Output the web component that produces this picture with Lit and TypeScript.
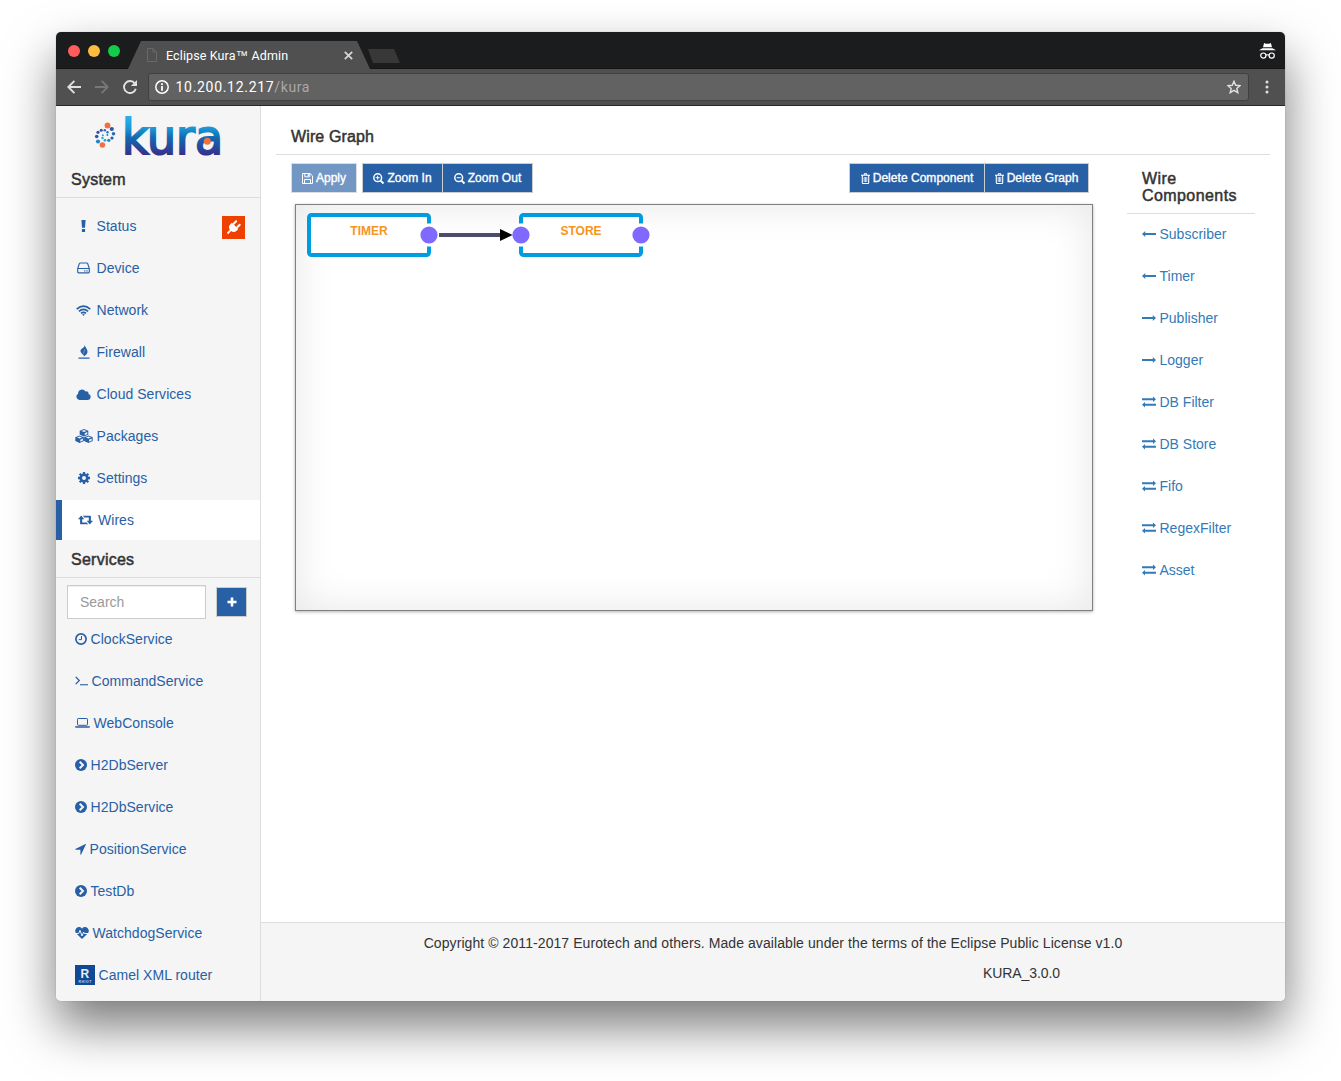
import { LitElement, html, svg, css } from "lit";
import { customElement, property } from "lit/decorators.js";

type Glyph = { w: number; h: number; body: unknown };

const glyphs: Record<string, Glyph> = {
  bang: { w: 5, h: 12, body: svg`<path fill="currentColor" d="M.4 0h4.2l-.6 7.8H1zM.9 8.9h3.2v3H.9z"/>` },
  hdd: {
    w: 13, h: 12,
    body: svg`<path fill="none" stroke="currentColor" stroke-width="1.150" d="M.7 6.600 2.300 1.600Q2.500 1 3.200 1h6.600q.7 0 .9.6l1.600 5V10q0 .9-.9.9H1.600Q.7 10.900.7 10zM.9 6.500h11.300"/><path fill="currentColor" d="M7.200 8.200h1.200v1.200H7.200zM9.400 8.200h1.200v1.200H9.400z"/>`,
  },
  wifi: {
    w: 15, h: 11,
    body: svg`<g fill="none" stroke="currentColor" stroke-width="1.700"><path d="M.7 4.100Q7.500-2 14.300 4.100"/><path d="M2.900 6.300Q7.500 2.300 12.100 6.300"/><path d="M5 8.400Q7.500 6.400 10 8.400"/></g><path fill="currentColor" d="M6.200 9.500Q7.500 8.600 8.800 9.500L7.500 10.900z"/>`,
  },
  fire: {
    w: 12, h: 14,
    body: svg`<path fill="currentColor" d="M.5 12.600h11v1.100H.5zM6.600 0C7.300 2.800 9.500 3.800 9.500 6.800 9.500 9.300 7.600 10.300 5.800 11.600 6.200 9.900 4.800 9.800 3.600 8.300 1.400 5.500 3 4.200 4.800 3 6.300 2 6.800 1.200 6.600 0z"/><path stroke="#f5f5f5" stroke-width=".4" fill="none" d="M6.600 4.400C7.200 6 5.200 6.500 5.700 8.400"/>`,
  },
  cloud: {
    w: 15, h: 11,
    body: svg`<path fill="currentColor" d="M3.400 10.900A3.300 3.300 0 0 1 2.100 4.700 4 4 0 0 1 9.500 2.500 2.200 2.200 0 0 1 12.500 5.100 2.950 2.950 0 0 1 11.900 10.900z"/>`,
  },
  cubes: {
    w: 18, h: 14,
    body: svg`${[[9, 0], [4.6, 6.500], [13.400, 6.500]].map(
      ([x, y]) => svg`<g transform="translate(${x} ${y})"><path fill="currentColor" d="M0 0 4.300 1.700V5.600L0 7.500-4.300 5.600V1.700z"/><path fill="#f5f5f5" d="M0 .9 2.600 1.900 0 3-2.600 1.900z"/><path fill="#f5f5f5" d="M.7 4.200 3.300 3V5L.7 6.200z"/></g>`
    )}`,
  },
  cog: {
    w: 12, h: 12,
    body: svg`<circle cx="6" cy="6" r="3.300" fill="none" stroke="currentColor" stroke-width="2.600"/><g stroke="currentColor" stroke-width="2.300"><path d="M6 0v2M6 10v2M0 6h2M10 6h2M1.700 1.700 3.200 3.200M8.800 8.800l1.500 1.500M1.700 10.300l1.500-1.500M8.800 3.200l1.500-1.500"/></g>`,
  },
  retweet: {
    w: 15, h: 10,
    body: svg`<path fill="currentColor" d="M3.200.5 6.300 4.200H4.200V7.600h4.500l1.500 1.700H2.700q-.6 0-.6-.6V4.200H0zM11.800 9.500 8.700 5.800h2.100V2.400H6.300L4.800.7h7.500q.6 0 .6.6v4.500H15z"/>`,
  },
  plug: {
    w: 15, h: 15,
    body: svg`<g transform="rotate(45 7.500 7.500)" fill="#fff"><path d="M3 5.200h9v2q0 4.100-3.600 4.500V16H6.600v-4.300Q3 11.300 3 7.200z"/><rect x="4" y=".2" width="2" height="5.500" rx="1"/><rect x="9" y=".2" width="2" height="5.500" rx="1"/></g>`,
  },
  clock: {
    w: 12, h: 12,
    body: svg`<circle cx="6" cy="6" r="5.100" fill="none" stroke="currentColor" stroke-width="1.700"/><path d="M6.500 3v3.600H3.800" fill="none" stroke="currentColor"/>`,
  },
  terminal: {
    w: 13, h: 10,
    body: svg`<path d="M.7.900 4.300 4.500.7 8.100" fill="none" stroke="currentColor" stroke-width="1.300"/><path fill="currentColor" d="M5 8.200h8v1.100H5z"/>`,
  },
  laptop: {
    w: 15, h: 10,
    body: svg`<rect x="2.500" y=".5" width="10" height="6.800" rx=".7" fill="none" stroke="currentColor"/><path fill="currentColor" d="M0 8.200h15v.5q0 1-1.300 1H1.300Q0 9.700 0 8.700z"/>`,
  },
  chevron: {
    w: 12, h: 12,
    body: svg`<circle cx="6" cy="6" r="6" fill="currentColor"/><path d="M4.700 2.700 8 6 4.700 9.300" fill="none" stroke="#f5f5f5" stroke-width="2"/>`,
  },
  location: { w: 11, h: 11, body: svg`<path fill="currentColor" d="M11 .3 6 10.800q-.5.400-.6-.3V5.700H.6Q-.1 5.500.3 5.100L10.500 0q.5-.1.500.3z"/>` },
  heart: {
    w: 14, h: 12,
    body: svg`<path fill="currentColor" d="M7 1.700C8-.3 11-.5 12.700 1.200 14.200 2.800 14.200 5 12.700 6.500L7 12 1.300 6.500C-.2 5-.2 2.800 1.300 1.200 3-.5 6-.3 7 1.700z"/><path d="M0 6.500h3.700L5 3.300 7 9 8.600 5l.8 1.500H14" fill="none" stroke="#f5f5f5"/>`,
  },
  router: {
    w: 20, h: 20,
    body: svg`<rect width="20" height="20" fill="#114a94"/><text x="9.800" y="12.500" text-anchor="middle" font-size="12" font-weight="700" fill="#e6eef8">R</text><text x="3.500" y="17.600" font-size="3.500" font-weight="700" textLength="13" fill="#b9cbe6">RHIOT</text>`,
  },
  floppy: {
    w: 11, h: 11,
    body: svg`<path fill="none" stroke="currentColor" d="M.5.5h7.600l2.400 2.400v7.600H.5zM2.500 10.300V6.500h6v3.800M2.800.600v3.200h4.900V.600"/><path fill="currentColor" d="M5.700 1h1.200v2H5.700z"/>`,
  },
  zoomIn: {
    w: 11, h: 11,
    body: svg`<g fill="none" stroke="currentColor"><circle cx="4.700" cy="4.700" r="3.900" stroke-width="1.500"/><path d="m7.600 7.600 2.900 2.900" stroke-width="1.900"/><path d="M2.700 4.700h4M4.700 2.700v4"/></g>`,
  },
  zoomOut: {
    w: 11, h: 11,
    body: svg`<g fill="none" stroke="currentColor"><circle cx="4.700" cy="4.700" r="3.900" stroke-width="1.500"/><path d="m7.600 7.600 2.900 2.900" stroke-width="1.900"/><path d="M2.700 4.700h4"/></g>`,
  },
  trash: {
    w: 9, h: 11,
    body: svg`<path fill="none" stroke="currentColor" stroke-width="1.100" d="M0 2.300h9M1.300 2.500v7.200q0 .8.800.8h4.800q.8 0 .8-.8V2.500M3 2.200 3.500.700h2l.5 1.500"/><path fill="none" stroke="currentColor" stroke-width=".8" d="M3.200 4v5M4.500 4v5M5.800 4v5"/>`,
  },
  plus: { w: 10, h: 10, body: svg`<path fill="currentColor" d="M3.700.500h2.600v3.200h3.200v2.600H6.300v3.200H3.700V6.300H.5V3.700h3.200z"/>` },
  left: { w: 14, h: 6, body: svg`<path fill="currentColor" d="M0 3 3.200-.100V2H14v2H3.200V6.100z"/>` },
  right: { w: 14, h: 6, body: svg`<path fill="currentColor" d="M14 3 10.800-.100V2H0v2h10.800V6.100z"/>` },
  exchange: {
    w: 14, h: 10,
    body: svg`<path fill="currentColor" d="M14 2.300 11-.500v1.800H0v2h11V5.100zM0 7.700 3 4.900v1.800h11v2H3v1.800z"/>`,
  },
};

@customElement("k-icon")
class KIcon extends LitElement {
  @property() name = "";
  static styles = css`
    :host { display: inline-flex; flex: none; }
    svg { display: block; overflow: visible; font-family: "Liberation Sans", Arial, sans-serif; }
  `;
  render() {
    const g = glyphs[this.name];
    return html`<svg width=${g.w} height=${g.h} viewBox="0 0 ${g.w} ${g.h}">${g.body}</svg>`;
  }
}

@customElement("browser-chrome")
class BrowserChrome extends LitElement {
  static styles = css`
    :host { display: block; font-family: Roboto, sans-serif; }
    .strip { height: 37px; background: #1b1c1d; display: flex; box-sizing: border-box; padding-left: 12px; border-bottom: 1px solid #151516; }
    .lights { display: flex; gap: 8px; padding-top: 13px; width: 60px; }
    .light { width: 12px; height: 12px; border-radius: 50%; }
    .r { background: #ff5c5c; } .y { background: #ffbd3f; } .g { background: #14cc4c; }
    .tab { margin: 9px 0 -1px 0; height: 28px; width: 242px; background: #505050; clip-path: polygon(0 100%, 13px 0, 229px 0, 100% 100%); display: flex; align-items: center; box-sizing: border-box; padding: 0 17px 0 19px; color: #fff; font-size: 12px; }
    .tab svg { flex: none; }
    .title { margin-left: 9px; flex: 1; letter-spacing: .12px; white-space: nowrap; font-size: 12.500px; }
    .tm { font-family: "Liberation Sans", Arial, sans-serif; }
    .newtab { width: 32px; height: 14px; margin: 17px 0 0 -2px; background: #383838; clip-path: polygon(0 0, 26px 0, 32px 100%, 5px 100%); }
    .incog { margin: 10px 9.500px 0 auto; }
    .bar { height: 37px; background: #505050; border-bottom: 1px solid #2b2729; display: flex; align-items: center; box-sizing: border-box; padding-left: 11px; }
    .nav { display: flex; gap: 14px; width: 81px; }
    .url { width: 1101px; height: 28px; box-sizing: border-box; border: 1px solid #404040; border-radius: 3px; background: #626262; display: flex; align-items: center; padding: 0 7px 0 6px; font-size: 14px; letter-spacing: .7px; color: #fff; }
    .addr { margin-left: 6.500px; flex: 1; }
    .path { color: #a9a9a9; letter-spacing: .6px; }
    .dots { margin-left: 15px; }
    svg { display: block; }
  `;
  render() {
    return html`
      <div class="strip">
        <div class="lights"><div class="light r"></div><div class="light y"></div><div class="light g"></div></div>
        <div class="tab">
          <svg width="10" height="14" viewBox="0 0 10 14" fill="none" stroke="#686868"><path d="M.5.500h5.500l3.500 3.500v9.500h-9zM6 .5v3.500h3.500"/></svg>
          <span class="title">Eclipse Kura<span class="tm">™</span> Admin</span>
          <svg width="9" height="9" viewBox="0 0 9 9" stroke="#d8d8d8" stroke-width="1.700"><path d="m.8.8 7.400 7.400M8.200.8.8 8.200"/></svg>
        </div>
        <div class="newtab"></div>
        <svg class="incog" width="17" height="18" viewBox="0 0 17 18">
          <path fill="#fff" d="M5.100 1 6.900 1.700h3.200L11.900 1l1.100 4.200H4zM3.500 6.200h10L17 8.300H0z"/>
          <g fill="none" stroke="#fff" stroke-width="1.200"><circle cx="4.300" cy="13.600" r="2.600"/><circle cx="12.700" cy="13.600" r="2.600"/><path d="M6.900 13.100q1.600-.7 3.200 0"/></g>
        </svg>
      </div>
      <div class="bar">
        <div class="nav">
          <svg width="14" height="14" viewBox="0 0 14 14" fill="none" stroke="#e0e0e0" stroke-width="1.900"><path d="M14 7H1.500M7.400.8 1.300 7l6.100 6.200"/></svg>
          <svg width="14" height="14" viewBox="0 0 14 14" fill="none" stroke="#787878" stroke-width="1.900"><path d="M0 7h12.500M6.600.8 12.700 7l-6.100 6.200"/></svg>
          <svg width="14" height="14" viewBox="0 0 14 14"><path d="M11.900 3.500A6 6 0 1 0 12.800 8.800" fill="none" stroke="#e0e0e0" stroke-width="1.900"/><path fill="#e0e0e0" d="M14 0v6.100H7.900z"/></svg>
        </div>
        <div class="url">
          <svg width="14" height="14" viewBox="0 0 14 14"><circle cx="7" cy="7" r="6.200" fill="none" stroke="#fff" stroke-width="1.500"/><path fill="#fff" d="M6.100 6h1.800v4.700H6.100zM6.100 3.300h1.800V5H6.100z"/></svg>
          <span class="addr">10.200.12.217<span class="path">/kura</span></span>
          <svg width="14" height="14" viewBox="0 0 14 14"><path d="m7 1.300 1.700 4 4.400.400-3.300 2.800 1 4.200L7 10.400l-3.800 2.300 1-4.200L.9 5.700l4.400-.400z" fill="none" stroke="#e0e0e0" stroke-width="1.400"/></svg>
        </div>
        <svg class="dots" width="6" height="14" viewBox="0 0 6 14" fill="#e0e0e0"><circle cx="3" cy="2" r="1.500"/><circle cx="3" cy="7" r="1.500"/><circle cx="3" cy="12" r="1.500"/></svg>
      </div>`;
  }
}

const systemItems = [
  ["bang", "Status"], ["hdd", "Device"], ["wifi", "Network"], ["fire", "Firewall"],
  ["cloud", "Cloud Services"], ["cubes", "Packages"], ["cog", "Settings"], ["retweet", "Wires"],
];
const serviceItems = [
  ["clock", "ClockService"], ["terminal", "CommandService"], ["laptop", "WebConsole"],
  ["chevron", "H2DbServer"], ["chevron", "H2DbService"], ["location", "PositionService"],
  ["chevron", "TestDb"], ["heart", "WatchdogService"], ["router", "Camel XML router"],
];

// Beads of the logo mark: x, y, radius, fill.
const beads: [number, number, number, string][] = [
  [12.500, 10.500, 2.900, "#f0703f"], [16.800, 14, 2.100, "#2a58a6"], [18.500, 18.800, 1.800, "#2a6db5"],
  [17, 23, 1.600, "#2a58a6"], [13.800, 25.300, 1.600, "#2485c6"], [10, 25.300, 1.400, "#2aa3dc"],
  [7.500, 23, 1.200, "#2aa3dc"], [7.900, 20.200, 1, "#2aa3dc"], [7.400, 30, 2.800, "#f0703f"],
  [3, 26.500, 2.100, "#2485c6"], [1.700, 21.500, 1.800, "#2a58a6"], [3, 17.300, 1.600, "#2a58a6"],
  [6.200, 15.300, 1.500, "#2a58a6"], [9.800, 15.300, 1.300, "#2a6db5"], [12.500, 17.300, 1.200, "#2a6db5"], [12.400, 20, 1, "#2485c6"],
];

@customElement("kura-sidebar")
class KuraSidebar extends LitElement {
  static styles = css`
    :host { display: flex; flex-direction: column; box-sizing: border-box; width: 205px; background: #f5f5f5; border-right: 1px solid #ddd; color: #2860a6; }
    .logo { height: 55px; padding: 11px 0 0 39px; box-sizing: border-box; }
    .logo svg { display: block; overflow: visible; font-family: "DejaVu Sans", sans-serif; }
    .head { height: 37px; box-sizing: border-box; padding: 9px 15px 0; line-height: 20px; font-size: 16px; color: #333; -webkit-text-stroke: .5px #333; letter-spacing: .25px; border-bottom: 1px solid #ddd; }
    .services-head { height: 38px; padding-top: 10px; }
    .system { display: flex; flex-direction: column; gap: 2px; padding-top: 8px; }
    .row { height: 40px; display: flex; align-items: center; box-sizing: border-box; padding: 0 15px 0 18.500px; letter-spacing: .04px; }
    .slot { width: 18px; display: flex; justify-content: center; margin-right: 4px; }
    .active { background: #fff; border-left: 6px solid #2860a6; padding-left: 14px; }
    .alert { margin-left: auto; width: 23px; height: 23px; background: #ee4000; display: flex; align-items: center; justify-content: center; margin-top: 2px; }
    .search { display: flex; align-items: center; height: 48px; box-sizing: border-box; padding: 0 13px 0 11px; justify-content: space-between; }
    .field { width: 139px; height: 34px; box-sizing: border-box; border: 1px solid #ccc; background: #fff; padding: 0 12px; line-height: 32px; color: #999; box-shadow: inset 0 1px 1px rgba(0,0,0,.075); }
    .add { width: 31px; height: 30px; box-sizing: border-box; border: 1px solid #ccc; background: #2860a6; color: #fff; display: flex; align-items: center; justify-content: center; }
    .services { display: flex; flex-direction: column; gap: 2px; margin-top: -7px; }
    .services k-icon { margin-right: 4px; }
  `;
  render() {
    return html`
      <div class="logo">
        <svg width="127" height="38" viewBox="0 0 127 38">
          <defs><linearGradient id="ink" gradientUnits="userSpaceOnUse" x1="0" y1="0" x2="0" y2="38"><stop offset="0" stop-color="#27b0ec"/><stop offset=".25" stop-color="#1e9edb"/><stop offset=".55" stop-color="#1368b0"/><stop offset="1" stop-color="#35308c"/></linearGradient></defs>
          ${beads.map(([x, y, r, f]) => svg`<circle cx=${x} cy=${y - 2} r=${r} fill=${f}/>`)}
          <text x="27" y="37" font-size="47.500" textLength="101" lengthAdjust="spacingAndGlyphs" fill="url(#ink)" stroke="url(#ink)" stroke-width="2">kura</text>
          <circle cx="112.300" cy="24.300" r="3.500" fill="#f0703f"/>
        </svg>
      </div>
      <div class="head">System</div>
      <div class="system">
        ${systemItems.map(([icon, label]) => html`<div class="row ${label === "Wires" ? "active" : ""}">
          <span class="slot"><k-icon name=${icon}></k-icon></span><span>${label}</span>
          ${label === "Status" ? html`<span class="alert"><k-icon name="plug"></k-icon></span>` : ""}
        </div>`)}
      </div>
      <div class="head services-head">Services</div>
      <div class="search"><div class="field">Search</div><div class="add"><k-icon name="plus"></k-icon></div></div>
      <div class="services">
        ${serviceItems.map(([icon, label]) => html`<div class="row"><k-icon name=${icon}></k-icon><span>${label}</span></div>`)}
      </div>`;
  }
}

const components = [
  ["left", "Subscriber"], ["left", "Timer"], ["right", "Publisher"], ["right", "Logger"], ["exchange", "DB Filter"],
  ["exchange", "DB Store"], ["exchange", "Fifo"], ["exchange", "RegexFilter"], ["exchange", "Asset"],
];

@customElement("wire-panel")
class WirePanel extends LitElement {
  static styles = css`
    :host { display: flex; flex-direction: column; flex: 1; min-width: 0; background: #fff; color: #333; }
    .title { margin: 0 15px; height: 49px; box-sizing: border-box; border-bottom: 1px solid #ddd; padding: 21px 15px 0; line-height: 20px; font-size: 16px; -webkit-text-stroke: .5px #333; letter-spacing: .12px; }
    .body { display: flex; flex: 1; }
    .work { width: 832px; padding: 8px 0 0 30px; box-sizing: border-box; }
    .tools { display: flex; width: 798px; height: 30px; }
    .btn { height: 30px; box-sizing: border-box; border: 1px solid #ccc; background: #2860a6; color: #fff; font-size: 12px; display: flex; align-items: center; justify-content: center; gap: 3px; -webkit-text-stroke: .35px #fff; white-space: nowrap; letter-spacing: .03px; }
    .btn + .btn { border-left: 0; }
    .group { display: flex; }
    .apply { width: 66px; opacity: .65; margin-right: 5px; }
    .zin { width: 81px; } .zout { width: 90px; }
    .right { margin-left: auto; }
    .dcomp { width: 136px; } .dgraph { width: 104px; }
    .graph { margin: 11px 0 0 4px; width: 798px; height: 407px; box-sizing: border-box; border: 1px solid #808080; box-shadow: inset 0 0 40px rgba(0,0,0,.1), 0 1px 3px rgba(0,0,0,.3); }
    .graph svg { display: block; font-family: "Liberation Sans", Arial, sans-serif; }
    .side { margin: 0 0 0 34px; width: 128px; }
    .sidehead { height: 59px; box-sizing: border-box; border-bottom: 1px solid #ddd; padding: 15px 0 0 15px; font-size: 16px; line-height: 17.400px; -webkit-text-stroke: .5px #333; letter-spacing: .42px; }
    .list { display: flex; flex-direction: column; gap: 2px; color: #337ab7; }
    .item { height: 40px; display: flex; align-items: center; gap: 4px; padding-left: 14.500px; }
    .foot { height: 79px; box-sizing: border-box; border-top: 1px solid #ddd; background: #f5f5f5; padding-top: 10px; line-height: 20px; text-align: center; color: #333; }
    .copy { letter-spacing: .078px; }
    .ver { margin: 10px 225px 0 auto; width: 77px; white-space: nowrap; letter-spacing: -.08px; }
  `;
  node(x: number, label: string, ports: number[]) {
    return svg`<g transform="translate(${x} 8)">
      <rect x="2" y="2" width="120" height="40" rx="2.500" fill="#fff" stroke="#009ce0" stroke-width="4"/>
      <text x="62" y="22" text-anchor="middle" font-size="12" font-weight="700" fill="#f7941e">${label}</text>
      ${ports.map((p) => svg`<rect x=${p - 10} y="10.500" width="20" height="23" fill="#fff"/><circle cx=${p} cy="22" r="8.600" fill="#8069ff"/>`)}
    </g>`;
  }
  render() {
    return html`
      <div class="title">Wire Graph</div>
      <div class="body">
        <div class="work">
          <div class="tools">
            <div class="btn apply"><k-icon name="floppy"></k-icon>Apply</div>
            <div class="group">
              <div class="btn zin"><k-icon name="zoomIn"></k-icon>Zoom In</div>
              <div class="btn zout"><k-icon name="zoomOut"></k-icon>Zoom Out</div>
            </div>
            <div class="group right">
              <div class="btn dcomp"><k-icon name="trash"></k-icon>Delete Component</div>
              <div class="btn dgraph"><k-icon name="trash"></k-icon>Delete Graph</div>
            </div>
          </div>
          <div class="graph">
            <svg width="796" height="405" viewBox="0 0 796 405">
              ${this.node(11, "TIMER", [122])}
              ${this.node(223, "STORE", [2, 122])}
              <path d="M143 30h62" stroke="#4a4e6c" stroke-width="4"/>
              <path d="M204 24l12.500 6-12.500 6z" fill="#000"/>
            </svg>
          </div>
        </div>
        <div class="side">
          <div class="sidehead">Wire<br>Components</div>
          <div class="list">${components.map(([icon, label]) => html`<div class="item"><k-icon name=${icon}></k-icon><span>${label}</span></div>`)}</div>
        </div>
      </div>
      <div class="foot">
        <div class="copy">Copyright © 2011-2017 Eurotech and others. Made available under the terms of the Eclipse Public License v1.0</div>
        <div class="ver">KURA_3.0.0</div>
      </div>`;
  }
}

@customElement("app-root")
class AppRoot extends LitElement {
  static styles = css`
    :host { display: block; box-sizing: border-box; width: 1341px; height: 1081px; padding: 32px 56px 80px; background: #fff; overflow: hidden; font-family: "Liberation Sans", Arial, sans-serif; font-size: 14px; }
    .window { width: 1229px; height: 969px; border-radius: 5px; overflow: hidden; display: flex; flex-direction: column; box-shadow: 0 0 1px rgba(0,0,0,.4), 0 25px 50px rgba(0,0,0,.53); }
    .content { display: flex; flex: 1; min-height: 0; }
  `;
  render() {
    return html`<div class="window">
      <browser-chrome></browser-chrome>
      <div class="content"><kura-sidebar></kura-sidebar><wire-panel></wire-panel></div>
    </div>`;
  }
}
